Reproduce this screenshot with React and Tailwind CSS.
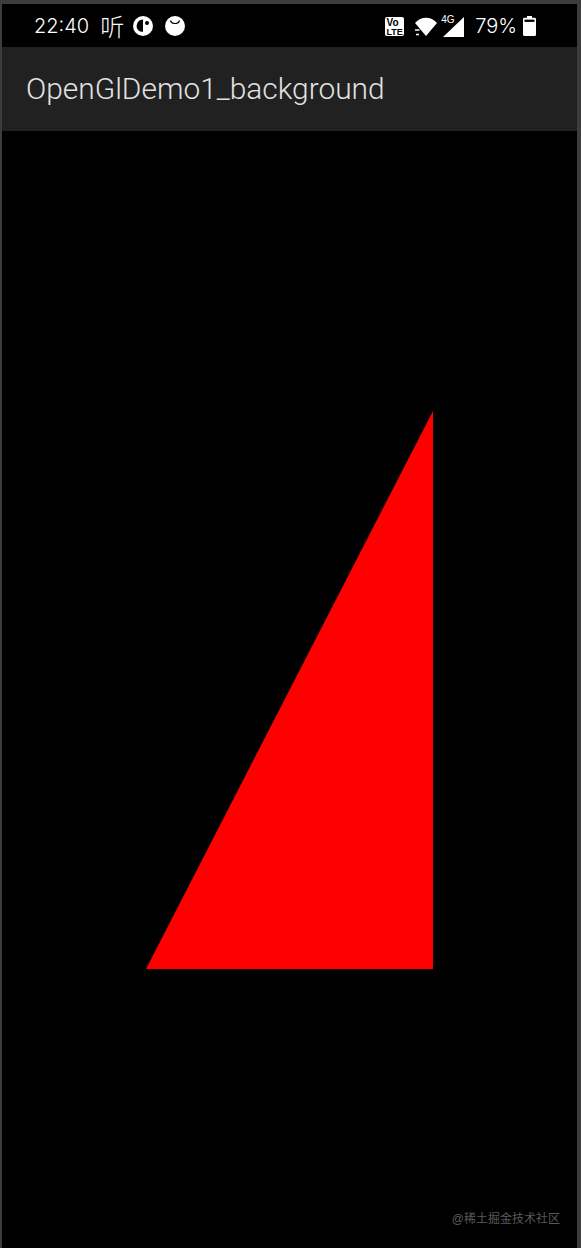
export default function App() {
  return (
    <div className="flex flex-col h-[1248px] bg-black border-l-2 border-t-4 border-r-4 border-[#3c3c3c] overflow-hidden font-['Liberation_Sans','Noto_Sans_CJK_SC',sans-serif]">
      {/* status bar */}
      <div className="flex items-center h-[43px] bg-black text-white pl-[32px] pr-[41px] pt-[1px]">
        <span className="text-[20px] font-light font-['Inter',sans-serif]">22:40</span>
        <span className="ml-[11px] text-[24px] leading-none font-light font-['Noto_Sans_CJK_SC',sans-serif]">听</span>
        <svg className="ml-[9px] shrink-0" width="20" height="20" viewBox="0 0 20 20">
          <circle cx="10" cy="10" r="10" fill="#fff" />
          <path d="M10 3.5a6.5 6.5 0 0 0-4.5 11c2 1.6 4.5 1.3 4.5 1.3z" fill="#000" />
          <circle cx="14" cy="7" r="2" fill="#000" />
        </svg>
        <svg className="ml-[12px] shrink-0" width="20" height="20" viewBox="0 0 20 20">
          <circle cx="10" cy="10" r="10" fill="#fff" />
          <path d="M5.5 4.5c1 4 8 4 9 0" fill="none" stroke="#000" strokeWidth="1.2" />
        </svg>
        <div className="ml-auto flex items-center">
          <svg className="shrink-0" width="19" height="19" viewBox="0 0 19 19">
            <rect width="19" height="19" rx="2" fill="#fff" />
            <text x="1.5" y="9" fontSize="10" fontWeight="700" fontFamily="Liberation Sans" fill="#000">Vo</text>
            <text x="1.5" y="17.5" fontSize="9" fontWeight="700" fontFamily="Liberation Sans" fill="#000">LTE</text>
          </svg>
          <svg className="ml-[10px] shrink-0" width="23" height="19" viewBox="0 0 23 19">
            <path d="M1 6C7-1 17-1 23 6L12 19z" fill="#fff" />
            <path d="M1 13h4.5M2 17.5h3" stroke="#fff" strokeWidth="1.3" />
          </svg>
          <div className="relative ml-[5px]">
            <svg className="block" width="22" height="21" viewBox="0 0 22 21">
              <path d="M22 1v20H1z" fill="#fff" />
            </svg>
            <span className="absolute -left-[1px] -top-[2px] text-[10px] leading-[12px]">4G</span>
          </div>
          <span className="ml-[11px] text-[20px] font-light font-['Inter',sans-serif]">79%</span>
          <svg className="ml-[6px] shrink-0" width="13" height="20" viewBox="0 0 13 22" preserveAspectRatio="none">
            <path d="M4 0h5v2h2.5a1.5 1.5 0 0 1 1.5 1.5V20.5a1.5 1.5 0 0 1-1.5 1.5h-10A1.5 1.5 0 0 1 0 20.5V3.5A1.5 1.5 0 0 1 1.5 2H4z" fill="#fff" />
            <rect x="1.5" y="4" width="10" height="2.5" fill="#000" />
          </svg>
        </div>
      </div>

      {/* app bar */}
      <div className="flex items-center h-[84px] bg-[#212121] pl-[24px]">
        <h1 className="text-[29.9px] font-light text-[#e2e2e2] font-['Roboto',sans-serif]">OpenGlDemo1_background</h1>
      </div>

      {/* GL surface */}
      <div className="relative flex-1 pt-[280px] pl-[144px]">
        <svg width="287" height="558" viewBox="0 0 287 558" className="block">
          <polygon points="0,558 287,558 287,0" fill="#ff0000" />
        </svg>
        <span className="absolute right-[17px] bottom-[20px] text-[12px] text-[#5a5a5a]">@稀土掘金技术社区</span>
      </div>
    </div>
  )
}
